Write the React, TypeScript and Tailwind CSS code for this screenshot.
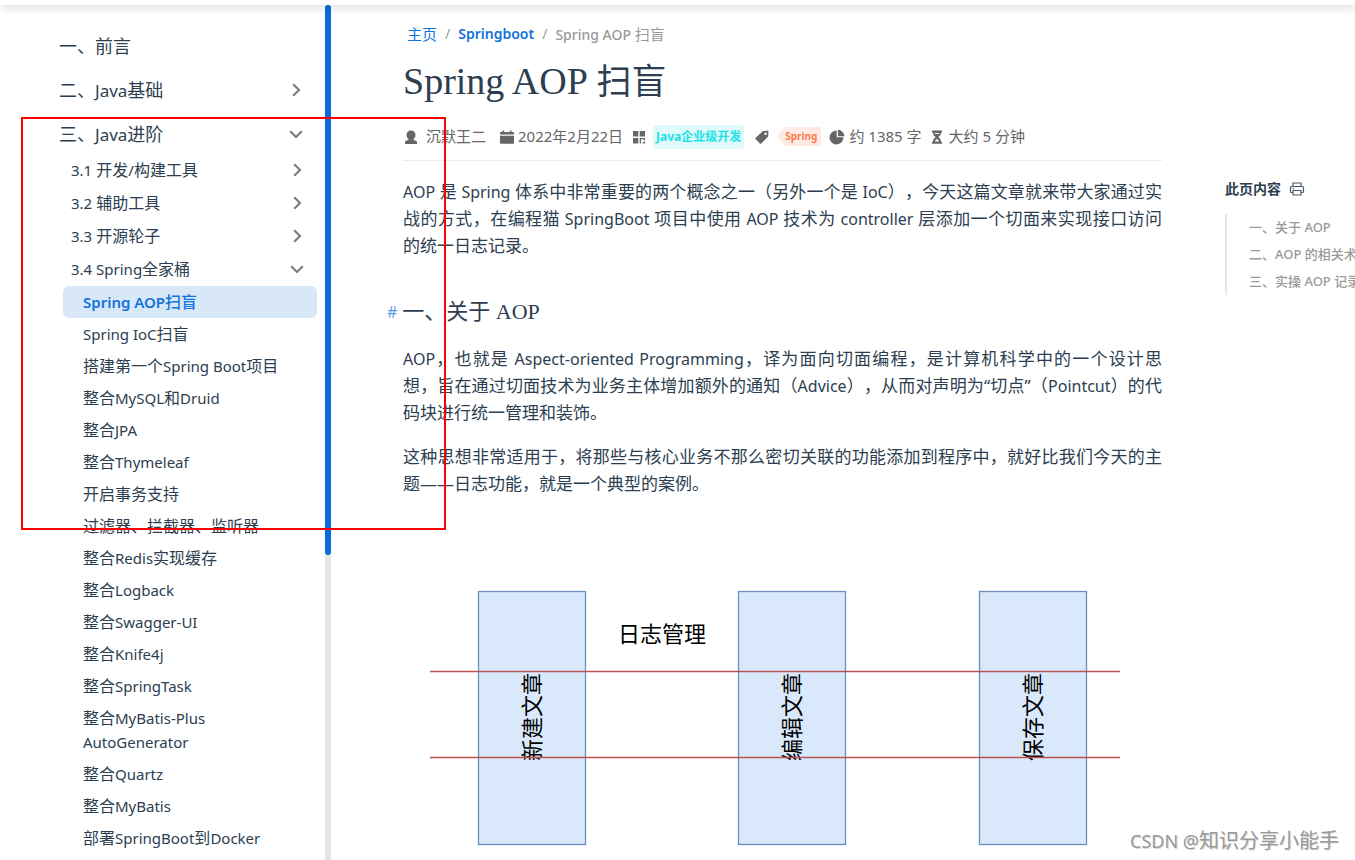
import React from "react";

const springItems = [
  "Spring IoC扫盲",
  "搭建第一个Spring Boot项目",
  "整合MySQL和Druid",
  "整合JPA",
  "整合Thymeleaf",
  "开启事务支持",
  "过滤器、拦截器、监听器",
  "整合Redis实现缓存",
  "整合Logback",
  "整合Swagger-UI",
  "整合Knife4j",
  "整合SpringTask",
  "整合MyBatis-Plus AutoGenerator",
  "整合Quartz",
  "整合MyBatis",
  "部署SpringBoot到Docker",
];

/** Sets the Latin runs of a mixed-script text in their own size. */
function Mixed({ text, latin }: { text: string; latin: string }) {
  return (
    <span>
      {text.split(/([\x21-\x7e][\x20-\x7e]*[\x21-\x7e]|[\x21-\x7e])/).map((part, i) =>
        i % 2 ? <span key={i} className={latin}>{part}</span> : part,
      )}
    </span>
  );
}

function Chevron({ open = false }: { open?: boolean }) {
  return (
    <svg viewBox="0 0 16 16" className="size-4 shrink-0" fill="none" stroke="#7f7f7f" strokeWidth="2.2" aria-hidden="true">
      {open ? <path d="M2.2 5.2 8 11l5.8-5.8" /> : <path d="M5.2 2.2 11 8l-5.8 5.8" />}
    </svg>
  );
}

function TopRow({ label, state }: { label: string; state?: "open" | "closed" }) {
  const style = "flex h-9 w-full items-center justify-between pr-[21px] pl-[59px] text-left text-[18px]";
  const text = <Mixed text={label} latin="text-[17px] leading-none" />;
  if (!state) return <a href="#preface" className={style}>{text}</a>;
  return (
    <button type="button" aria-expanded={state === "open"} className={style}>
      {text}
      <Chevron open={state === "open"} />
    </button>
  );
}

function SubRow({ label, open = false }: { label: string; open?: boolean }) {
  return (
    <button type="button" aria-expanded={open} className="flex h-[33px] w-full items-center justify-between pr-5 pl-[71px] text-left text-[16px]">
      <Mixed text={label} latin="text-[15px] leading-none" />
      <Chevron open={open} />
    </button>
  );
}

function Sidebar() {
  return (
    <aside className="flex w-[331px] shrink-0">
      <nav className="flex-1 overflow-hidden pt-[23px]">
        <div className="flex flex-col gap-2">
          <TopRow label="一、前言" />
          <TopRow label="二、Java基础" state="closed" />
          <TopRow label="三、Java进阶" state="open" />
        </div>
        <div className="py-px">
          <SubRow label="3.1 开发/构建工具" />
          <SubRow label="3.2 辅助工具" />
          <SubRow label="3.3 开源轮子" />
          <SubRow label="3.4 Spring全家桶" open />
        </div>
        <ul className="pr-2 pl-[63px] text-[16px] leading-6">
          <li>
            <a href="#aop" className="block rounded-md bg-[#d9e8f9] px-5 py-1 font-medium text-[#1272dc]">
              <Mixed text="Spring AOP扫盲" latin="text-[15px] leading-none font-semibold" />
            </a>
          </li>
          {springItems.map((item) => (
            <li key={item}>
              <a href="#item" className="block py-1 pr-9 pl-5"><Mixed text={item} latin="text-[15px]" /></a>
            </li>
          ))}
        </ul>
      </nav>
      <div className="w-1.5 bg-[#e5e5e5]">
        <div className="h-[550px] rounded-full bg-[#096dd9]" />
      </div>
    </aside>
  );
}

function AuthorIcon() {
  return (
    <svg viewBox="0 0 16 16" className="size-4" fill="#666" aria-hidden="true">
      <path d="M8 1.5c2.700 0 4.500 1.900 4.500 4.400 0 1.700-.8 3.200-2 4v.9l2.800 1.300c.5.2.7.5.7 1V15H2v-1.900c0-.5.2-.8.7-1l2.800-1.300v-.9c-1.200-.8-2-2.300-2-4 0-2.500 1.800-4.400 4.500-4.400z" />
    </svg>
  );
}

function CalendarIcon() {
  return (
    <svg viewBox="0 0 16 16" className="size-4" fill="#666" aria-hidden="true">
      <path d="M1 5.600V4c0-.6.4-1 1-1h1.500V1.500h1.600V3h5.800V1.500h1.600V3H14c.6 0 1 .4 1 1v1.600zM1 6.700h14v6.800c0 .8-.5 1.300-1.300 1.300H2.300c-.8 0-1.300-.5-1.300-1.300z" />
    </svg>
  );
}

function CategoryIcon() {
  return (
    <svg viewBox="0 0 16 16" className="size-4" fill="#666" aria-hidden="true">
      <path d="M2 2h5.300v5.500H2zM8.700 2H14v5.500H8.700zM2 9h5.300v5.500H2zM8.700 9h5.300v2.400h-1.200v-1.200H10v4.300H8.700zM11.400 13.400h1.400v-1H14v2.100h-2.600z" />
    </svg>
  );
}

function TagIcon() {
  return (
    <svg viewBox="0 0 16 16" className="size-4" fill="#666" aria-hidden="true">
      <path fillRule="evenodd" d="M9.200 2.100 13.500 1.800c.6 0 1 .4 1 1l-.3 4.300c0 .3-.1.500-.3.700l-6.600 6.600c-.4.4-1 .4-1.400 0L1.700 10.200c-.4-.4-.4-1 0-1.400l6.800-6.400c.2-.2.400-.3.700-.3zM11.600 3.600a1.200 1.200 0 1 0 0 2.400 1.200 1.200 0 0 0 0-2.400z" />
    </svg>
  );
}

function PieIcon() {
  return (
    <svg viewBox="0 0 16 16" className="size-4" fill="#666" aria-hidden="true">
      <path d="M7.700 1.500v6.800h6.800A7 7 0 1 1 7.700 1.500zM8.900.8a6.500 6.500 0 0 1 6.400 6.400H8.900z" />
    </svg>
  );
}

function HourglassIcon() {
  return (
    <svg viewBox="0 0 16 16" className="size-4" aria-hidden="true">
      <path fill="#666" d="M3 1.500h10v2h-1c0 2-1 3.500-2.800 4.600C11 9.200 12 10.700 12 12.800h1v2H3v-2h1c0-2.100 1-3.600 2.800-4.700C5 7 4 5.500 4 3.500H3z" />
      <path fill="#fff" d="M5.800 4h4.400l-.3 1H6.100zM8 10c1.100.7 1.800 1.500 2.100 2.400H5.900C6.200 11.500 6.900 10.700 8 10z" />
    </svg>
  );
}

function PrintIcon() {
  return (
    <svg viewBox="0 0 16 16" className="size-4" fill="none" stroke="#4a5b6c" strokeWidth="1.2" aria-hidden="true">
      <path d="M4 5.500V2h8v3.500M4 11.500H2.500a1 1 0 0 1-1-1v-4a1 1 0 0 1 1-1h11a1 1 0 0 1 1 1v4a1 1 0 0 1-1 1H12M4 9.500h8V14H4zM3.500 7.500H5" />
    </svg>
  );
}

function Meta() {
  return (
    <div className="flex h-12 items-center border-b border-[#eaecef] text-[15px] text-[#666]">
      <span className="flex items-center gap-[7px]"><AuthorIcon />沉默王二</span>
      <span className="ml-[13px] flex items-center gap-[3px]"><CalendarIcon />2022年2月22日</span>
      <span className="ml-2 flex items-center gap-[6px]">
        <CategoryIcon />
        <span className="rounded bg-[#e0fafb] px-[3px] text-[12px] leading-6 font-bold text-[#19e3e6]">Java企业级开发</span>
      </span>
      <span className="ml-[10px] flex items-center gap-[7px]">
        <TagIcon />
        <span className="flex">
          <svg viewBox="0 0 8 19" className="h-[19px] w-2" fill="#ffebe5" aria-hidden="true"><path d="M8 0v19L0 9.500z" /></svg>
          <span className="bg-[#ffebe5] pr-1 text-[10px] leading-[19px] font-bold text-[#fb7c4c]">Spring</span>
        </span>
      </span>
      <span className="ml-2 flex items-center gap-1"><PieIcon />约 1385 字</span>
      <span className="ml-[7px] flex items-center gap-1"><HourglassIcon />大约 5 分钟</span>
    </div>
  );
}

function AspectDiagram() {
  const columns = [
    { x: 75.5, label: "新建文章" },
    { x: 335.5, label: "编辑文章" },
    { x: 576.5, label: "保存文章" },
  ];
  return (
    <svg viewBox="0 0 759 280" className="mt-[93px] w-full" fontFamily="'Noto Sans CJK SC', sans-serif" fontSize="22" textAnchor="middle" role="img">
      {columns.map(({ x, label }) => (
        <g key={label}>
          <rect x={x} y="1.5" width="107" height="253" fill="#dae8fc" stroke="#6c8ebf" strokeWidth="1.3" />
          <text transform={`translate(${x + 61} 127) rotate(-90)`}>{label}</text>
        </g>
      ))}
      <text x="259" y="52">日志管理</text>
      <path d="M27 81.5h690M27 167.5h690" stroke="#b85450" strokeWidth="1.4" />
    </svg>
  );
}

function Paragraph({ text }: { text: string }) {
  return <p className="mt-[17px] text-justify [text-spacing-trim:space-all]"><Mixed text={text} latin="text-[16px] leading-none" /></p>;
}

function Article() {
  return (
    <main className="w-[759px] shrink-0">
      <nav aria-label="breadcrumb" className="flex gap-2 px-1 pt-[17px] text-[15px] leading-6 text-[#999]">
        <a href="#home" className="text-[#1272dc]">主页</a>
        <span className="text-[14px]">/</span>
        <a href="#springboot" className="text-[14px] font-semibold text-[#1272dc]">Springboot</a>
        <span className="text-[14px]">/</span>
        <Mixed text="Spring AOP 扫盲" latin="text-[14px] leading-none font-medium" />
      </nav>
      <h1 className="mt-[13px] mb-[6px] font-['Liberation_Serif','Noto_Sans_CJK_SC',serif] text-[35px] leading-[48px]">
        <span className="text-[38px] leading-none">Spring AOP</span> 扫盲
      </h1>
      <Meta />
      <Paragraph text="AOP 是 Spring 体系中非常重要的两个概念之一（另外一个是 IoC），今天这篇文章就来带大家通过实战的方式，在编程猫 SpringBoot 项目中使用 AOP 技术为 controller 层添加一个切面来实现接口访问的统一日志记录。" />
      <h2 className="mt-[37px] -ml-4 flex items-center gap-[5px] font-['Liberation_Serif','Noto_Sans_CJK_SC',serif] text-[22px] leading-8">
        <a href="#about" className="font-['Noto_Sans',sans-serif] text-[16px] text-[#1272dc]/70">#</a>
        一、关于 AOP
      </h2>
      <Paragraph text={"AOP，也就是 Aspect-oriented Programming，译为面向切面编程，是计算机科学中的一个设计思想，\u2060旨在通过切面技术为业务主体增加额外的通知（Advice），从而对声明为“切点”（Pointcut）的代码块进行统一管理和装饰。"} />
      <Paragraph text="这种思想非常适用于，将那些与核心业务不那么密切关联的功能添加到程序中，就好比我们今天的主题——日志功能，就是一个典型的案例。" />
      <AspectDiagram />
    </main>
  );
}

function Toc() {
  return (
    <aside className="ml-[63px] w-48 shrink-0 pt-[172px]">
      <div className="flex items-center gap-2 text-[14px] leading-6 font-bold">
        此页内容
        <button type="button" aria-label="打印"><PrintIcon /></button>
      </div>
      <ul className="mt-[13px] border-l-2 border-[#e5e7eb] pl-[22px] text-[13px] leading-[27px] font-medium whitespace-nowrap text-[#999]">
        <li><a href="#about">一、关于 AOP</a></li>
        <li><a href="#terms">二、AOP 的相关术语</a></li>
        <li><a href="#practice">三、实操 AOP 记录</a></li>
      </ul>
    </aside>
  );
}

export default function App() {
  return (
    <div className="relative flex h-screen flex-col overflow-hidden bg-white font-['Noto_Sans','Noto_Sans_CJK_SC',sans-serif] text-[#2c3e50]">
      <header className="z-10 h-[5px] shrink-0 bg-white shadow-[0_2px_8px_rgba(0,0,0,0.2)]" />
      <div className="flex min-h-0 flex-1">
        <Sidebar />
        <div className="flex min-w-0 flex-1 overflow-hidden pl-[72px] text-[17px] leading-[27px]">
          <Article />
          <Toc />
        </div>
      </div>
      <div className="pointer-events-none absolute top-[117px] left-[21px] h-[413px] w-[425px] border-2 border-[#f00]" />
      <div className="absolute right-4 bottom-1 text-[20px] leading-[30px] text-[#999] [text-shadow:1px_1px_0_#ddd]">
        <Mixed text="CSDN @知识分享小能手" latin="text-[18px] leading-none" />
      </div>
    </div>
  );
}
